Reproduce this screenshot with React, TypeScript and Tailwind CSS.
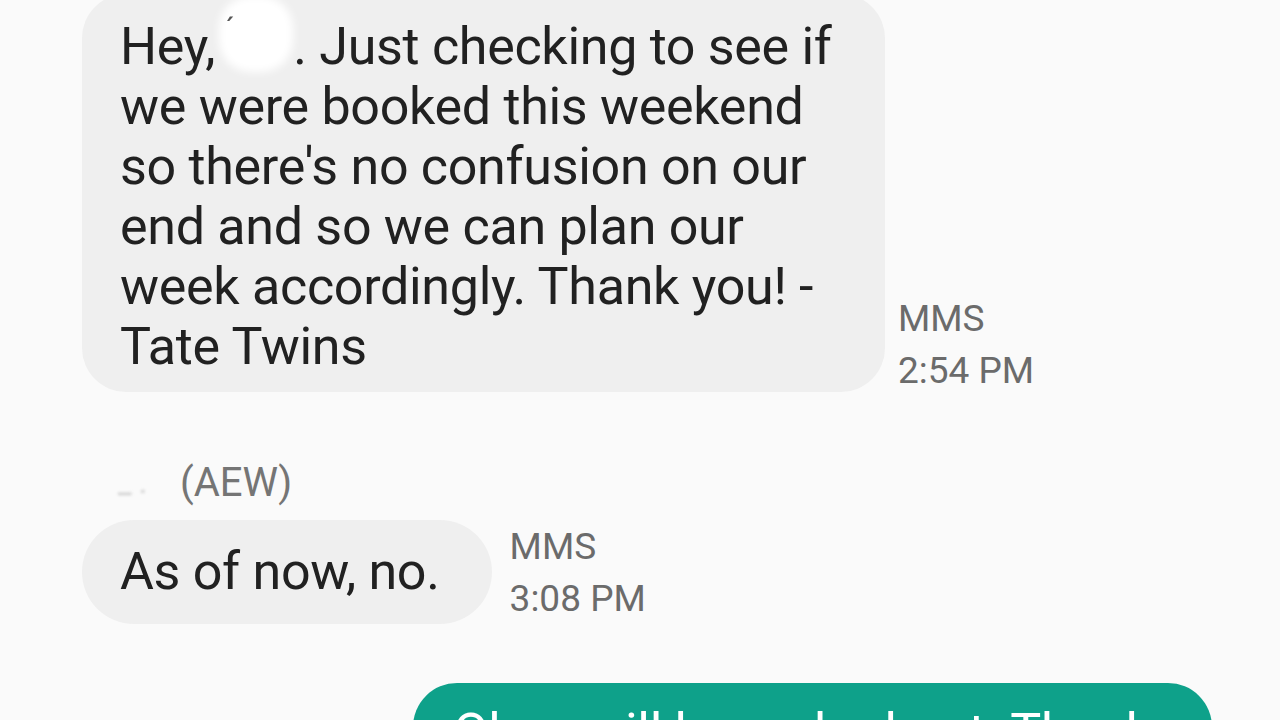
import React from "react";

export default function App() {
  return (
    <div
      className="w-[1280px] h-[720px] overflow-hidden bg-[#fafafa] text-[#212121]"
      style={{ fontFamily: "Roboto, 'Noto Sans', Arial, sans-serif" }}
    >
      <div className="flex items-end pl-[82px] mt-[-6px]">
        <div className="w-[803px] rounded-[44px] bg-[#efefef] pl-[38px] pr-[20px] pt-[23px] pb-[15px] text-[52px] leading-[60px] tracking-[-0.3px]">
          Hey,
          <span className="relative inline-block w-[78px] h-[10px]">
            <span className="absolute left-[4px] top-[-58px] w-[74px] h-[76px] rounded-[32px] bg-white blur-[4px]" />
            <span className="absolute left-[10px] top-[-40px] text-[30px] leading-[30px] text-[#555] blur-[0.5px]">´</span>
          </span>
          . Just checking to see if
          <br />
          we were booked this weekend
          <br />
          so there's no confusion on our
          <br />
          end and so we can plan our
          <br />
          week accordingly. Thank you! -
          <br />
          Tate Twins
        </div>
        <div className="ml-[13px] mb-[-5px] text-[37px] leading-[52px] text-[#6b6b6b]">
          <div>MMS</div>
          <div>2:54 PM</div>
        </div>
      </div>

      <div className="mt-[68px] pl-[118px] flex items-center text-[40px] leading-[46px] text-[#757575]">
        <span className="text-[#c8c8c8] blur-[1.5px] text-[30px] w-[62px]">_ .</span>
        <span>(AEW)</span>
      </div>

      <div className="mt-[14px] flex items-start pl-[82px]">
        <div className="rounded-[52px] bg-[#efefef] pl-[38px] pr-[52px] py-[22px] text-[52px] leading-[60px] tracking-[-0.3px]">
          As of now, no.
        </div>
        <div className="ml-[18px] mt-[1px] text-[37px] leading-[52px] text-[#6b6b6b]">
          <div>MMS</div>
          <div>3:08 PM</div>
        </div>
      </div>

      <div className="mt-[58px] flex justify-end pr-[68px]">
        <div className="w-[799px] rounded-[44px] bg-[#0ea18a] pl-[40px] pt-[20px] pb-[20px] text-[52px] leading-[60px] text-white tracking-[-0.3px]">
          Okay, will be on lookout. Thanks
        </div>
      </div>
    </div>
  );
}
